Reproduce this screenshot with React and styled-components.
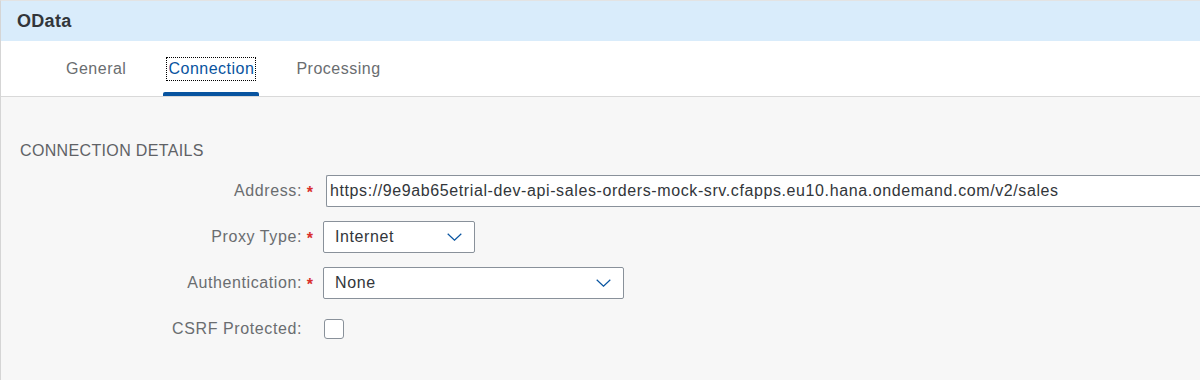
import React from "react";
import styled, { createGlobalStyle } from "styled-components";

const GlobalStyle = createGlobalStyle`
  html, body { margin: 0; padding: 0; background: #f7f7f7; }
  body { font-family: "Liberation Sans", Arial, sans-serif; overflow: hidden; }
  * { box-sizing: border-box; }
`;

const Frame = styled.div`
  height: 380px;
  border-top: 1px solid #e3e3e3;
  border-left: 1px solid #d5d5d5;
  background: #f7f7f7;
  overflow: hidden;
`;

const Header = styled.div`
  height: 40px;
  background: #d9ecfb;
  display: flex;
  align-items: center;
  padding-left: 16px;
  font-size: 18px;
  font-weight: bold;
  color: #32363a;
  letter-spacing: 0.3px;
`;

const TabBar = styled.div`
  height: 56px;
  background: #fff;
  border-bottom: 1px solid #d9d9d9;
  display: flex;
  gap: 33px;
  padding-left: 61px;
`;

const Tab = styled.div`
  position: relative;
  display: flex;
  align-items: center;
  padding: 0 4px;
  font-size: 16px;
  letter-spacing: 0.5px;
  color: ${(p) => (p.$active ? "#0854a0" : "#6a6d70")};
  &::after {
    content: "";
    position: absolute;
    left: 0;
    right: 0;
    bottom: 0;
    height: 4px;
    border-radius: 2px 2px 0 0;
    background: ${(p) => (p.$active ? "#0854a0" : "transparent")};
  }
`;

const TabLabel = styled.span`
  padding: 2px 1px;
  outline: ${(p) => (p.$focus ? "1px dotted #000" : "none")};
`;

const Content = styled.div`
  padding-top: 44px;
`;

const SectionTitle = styled.div`
  padding-left: 19px;
  font-size: 16px;
  line-height: 20px;
  letter-spacing: 0.35px;
  color: #5f6266;
  margin-bottom: 14px;
`;

const Form = styled.div`
  display: grid;
  grid-template-columns: 312px auto;
  column-gap: 10px;
  row-gap: 14px;
  align-items: center;
`;

const Label = styled.div`
  display: flex;
  justify-content: flex-end;
  align-items: center;
  height: 32px;
  font-size: 16px;
  letter-spacing: 0.6px;
  color: #6a6d70;
`;

const Required = styled.span`
  display: inline-block;
  width: 11px;
  padding-top: 3px;
  text-align: right;
  color: #d9302c;
  font-weight: bold;
  letter-spacing: 0;
`;

const FieldBox = styled.div`
  display: flex;
  align-items: center;
  height: 32px;
`;

const TextInput = styled.div`
  width: 900px;
  height: 32px;
  margin-left: 3px;
  background: #fff;
  border: 1px solid #89919a;
  border-right: none;
  border-radius: 2px 0 0 2px;
  display: flex;
  align-items: center;
  padding-left: 3px;
  font-size: 16px;
  letter-spacing: 0.6px;
  color: #32363a;
  white-space: nowrap;
`;

const Select = styled.div`
  width: ${(p) => p.$width}px;
  height: 32px;
  background: #fff;
  border: 1px solid #89919a;
  border-radius: 2px;
  display: flex;
  align-items: center;
  justify-content: space-between;
  padding-left: 11px;
  font-size: 16px;
  letter-spacing: 0.6px;
  color: #32363a;
`;

const Arrow = styled.span`
  width: 40px;
  height: 30px;
  display: flex;
  align-items: center;
  justify-content: center;
`;

const Checkbox = styled.div`
  width: 20px;
  height: 20px;
  margin-left: 1px;
  background: #fff;
  border: 1px solid #89919a;
  border-radius: 3px;
`;

const Chevron = () => (
  <svg width="15" height="8" viewBox="0 0 15 8">
    <path d="M0.7 0.7 L7.5 7.2 L14.3 0.7" fill="none" stroke="#0854a0" strokeWidth="1.2" />
  </svg>
);

const Row = ({ label, required, children }) => (
  <>
    <Label>
      {label}
      <Required>{required ? "*" : ""}</Required>
    </Label>
    <FieldBox>{children}</FieldBox>
  </>
);

export default function App() {
  return (
    <>
      <GlobalStyle />
      <Frame>
        <Header>OData</Header>
        <TabBar>
          <Tab>General</Tab>
          <Tab $active>
            <TabLabel $focus>Connection</TabLabel>
          </Tab>
          <Tab>Processing</Tab>
        </TabBar>
        <Content>
          <SectionTitle>CONNECTION DETAILS</SectionTitle>
          <Form>
            <Row label="Address:" required>
              <TextInput>
                https://9e9ab65etrial-dev-api-sales-orders-mock-srv.cfapps.eu10.hana.ondemand.com/v2/sales
              </TextInput>
            </Row>
            <Row label="Proxy Type:" required>
              <Select $width={152}>
                Internet
                <Arrow>
                  <Chevron />
                </Arrow>
              </Select>
            </Row>
            <Row label="Authentication:" required>
              <Select $width={301}>
                None
                <Arrow>
                  <Chevron />
                </Arrow>
              </Select>
            </Row>
            <Row label="CSRF Protected:">
              <Checkbox />
            </Row>
          </Form>
        </Content>
      </Frame>
    </>
  );
}
